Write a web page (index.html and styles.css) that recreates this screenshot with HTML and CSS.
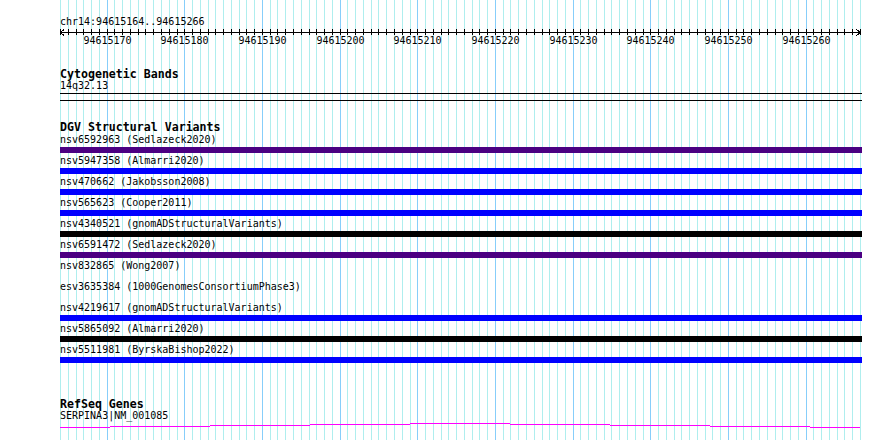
FILE: index.html
```html
<!DOCTYPE html>
<html lang="en">
<head>
  <meta charset="UTF-8" />
  <title>chr14:94615164..94615266</title>
  <link rel="stylesheet" href="styles.css">
</head>
<body>
  <div class="view">
    <svg class="grid" id="grid" width="890" height="440"></svg>

    <div class="tracks">
      <div class="ruler">
        <div class="ruler-label">chr14:94615164..94615266</div>
        <svg id="ruler" width="890" height="20"></svg>
      </div>

      <div class="track cyto">
        <div class="track-title">Cytogenetic Bands</div>
        <div class="label">14q32.13</div>
        <div class="band"></div>
      </div>

      <div class="track dgv">
        <div class="track-title">DGV Structural Variants</div>
        <div class="label">nsv6592963 (Sedlazeck2020)</div>
        <div class="bar complex"></div>
        <div class="label">nsv5947358 (Almarri2020)</div>
        <div class="bar gain"></div>
        <div class="label">nsv470662 (Jakobsson2008)</div>
        <div class="bar gain"></div>
        <div class="label">nsv565623 (Cooper2011)</div>
        <div class="bar gain"></div>
        <div class="label">nsv4340521 (gnomADStructuralVariants)</div>
        <div class="bar other"></div>
        <div class="label">nsv6591472 (Sedlazeck2020)</div>
        <div class="bar complex"></div>
        <div class="label">nsv832865 (Wong2007)</div>
        <div class="bar"></div>
        <div class="label">esv3635384 (1000GenomesConsortiumPhase3)</div>
        <div class="bar"></div>
        <div class="label">nsv4219617 (gnomADStructuralVariants)</div>
        <div class="bar gain"></div>
        <div class="label">nsv5865092 (Almarri2020)</div>
        <div class="bar other"></div>
        <div class="label">nsv5511981 (ByrskaBishop2022)</div>
        <div class="bar gain"></div>
      </div>

      <div class="track refseq">
        <div class="track-title">RefSeq Genes</div>
        <div class="label">SERPINA3|NM_001085</div>
        <svg class="gene" width="802" height="16">
          <path d="M0 5.5H50M50 4.5H150M150 3.5H250M250 2.5H350M350 1.5H450M450 2.5H550M550 3.5H650M650 4.5H750M750 5.5H800" />
        </svg>
      </div>
    </div>
  </div>

  <script>
    const NS = 'http://www.w3.org/2000/svg';
    const start = 94615164;
    const end = 94615266;
    const left = 60;
    const pxPerBp = 800 / (end - start + 1);

    function xAt(i) {
      return Math.round(left + i * pxPerBp) + 0.5;
    }

    function add(parent, tag, attrs) {
      const el = document.createElementNS(NS, tag);
      for (const k in attrs) el.setAttribute(k, attrs[k]);
      parent.appendChild(el);
      return el;
    }

    const grid = document.getElementById('grid');
    const ruler = document.getElementById('ruler');

    // one grid line per base, darker every 10 bp
    for (let i = 0; i <= end - start + 1; i++) {
      const x = xAt(i);
      const major = (start + i) % 10 === 0;
      add(grid, 'line', { x1: x, x2: x, y1: 0, y2: 440, class: major ? 'major' : 'minor' });
      add(ruler, 'line', { x1: x, x2: x, y1: 1, y2: 7, class: 'tick' });
      if (major) {
        const t = add(ruler, 'text', { x: x, y: 16, class: 'tick-label' });
        t.textContent = start + i;
      }
    }

    add(ruler, 'line', { x1: left, x2: xAt(end - start + 1), y1: 4.5, y2: 4.5, class: 'axis' });
    const r = xAt(end - start + 1);
    add(ruler, 'path', { d: `M${left + 4} 1.5L${left + 0.5} 4.5L${left + 4} 7.5M${r - 4} 1.5L${r} 4.5L${r - 4} 7.5`, class: 'axis' });
  </script>
</body>
</html>
```

FILE: styles.css
```css
body {
  margin: 0;
  background: #ffffff;
  font-family: "DejaVu Sans Mono", monospace;
  font-size: 10px;
  color: #000;
}

.view {
  position: relative;
  width: 890px;
  height: 440px;
  overflow: hidden;
}

.grid {
  position: absolute;
  top: 0;
  left: 0;
  shape-rendering: crispEdges;
}

.grid .minor {
  stroke: #afeeee;
}

.grid .major {
  stroke: #87cefa;
}

.tracks {
  position: relative;
}

.ruler-label {
  padding: 16px 0 0 60px;
  line-height: 12px;
}

.ruler svg {
  display: block;
}

.tick, .axis {
  stroke: #000;
  fill: none;
  shape-rendering: crispEdges;
}

.tick-label {
  font-family: "DejaVu Sans Mono", monospace;
  font-size: 10px;
  text-anchor: middle;
}

.track {
  width: 802px;
  padding-left: 60px;
}

.track-title {
  font-size: 11.6px;
  font-weight: bold;
  line-height: 12px;
}

.label {
  line-height: 12px;
  white-space: nowrap;
}

.cyto {
  margin-top: 20px;
}

.band {
  height: 6px;
  margin-top: 1px;
  border-top: 1px solid #000;
  border-bottom: 1px solid #000;
}

.dgv {
  margin-top: 20px;
}

.dgv .track-title {
  line-height: 13px;
}

.bar {
  height: 6px;
  margin: 1px 0 2px;
}

.bar.gain {
  background: #0000ff;
}

.bar.complex {
  background: #4b0082;
}

.bar.other {
  background: #000000;
}

.refseq {
  margin-top: 35px;
}

.gene {
  display: block;
  shape-rendering: crispEdges;
}

.gene path {
  stroke: #ff00ff;
  fill: none;
}
```
